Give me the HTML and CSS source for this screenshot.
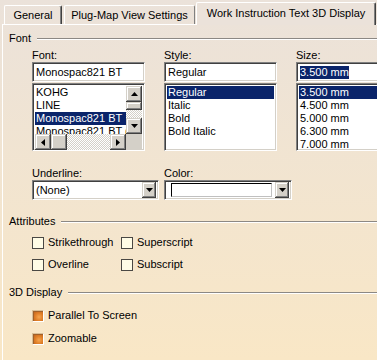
FILE: index.html
```html
<!DOCTYPE html>
<html lang="en">
<head>
<meta charset="UTF-8">
<title>Work Instruction Text 3D Display</title>
<link rel="stylesheet" href="styles.css">
</head>
<body>
<div class="dialog">
    <div class="tabs">
        <div class="tab tab-general">General</div>
        <div class="tab tab-plug">Plug-Map View Settings</div>
        <div class="tab tab-work active">Work Instruction Text 3D Display</div>
    </div>

    <div class="panel">
        <div class="group-title"><span>Font</span><i class="rule"></i></div>

        <div class="font-grid">
            <div class="field">
                <div class="label">Font:</div>
                <div class="edit sunken">Monospac821 BT</div>
                <div class="list sunken scrolled">
                    <div class="items">
                        <div class="item">KOHG</div>
                        <div class="item">LINE</div>
                        <div class="item selected">Monospac821 BT</div>
                        <div class="item">Monospac821 BT (</div>
                    </div>
                    <div class="vscroll">
                        <div class="btn"><svg width="7" height="4" viewBox="0 0 7 4"><path d="M0 4h7L3.5 0z"/></svg></div>
                        <div class="track v"><div class="thumb"></div></div>
                        <div class="btn"><svg width="7" height="4" viewBox="0 0 7 4"><path d="M0 0h7L3.5 4z"/></svg></div>
                    </div>
                    <div class="hscroll">
                        <div class="btn"><svg width="4" height="7" viewBox="0 0 4 7"><path d="M4 0v7L0 3.5z"/></svg></div>
                        <div class="btn thumb-h"></div>
                        <div class="track"></div>
                        <div class="btn"><svg width="4" height="7" viewBox="0 0 4 7"><path d="M0 0v7L4 3.5z"/></svg></div>
                    </div>
                    <div class="corner"></div>
                </div>
            </div>

            <div class="field">
                <div class="label">Style:</div>
                <div class="edit sunken">Regular</div>
                <div class="list sunken">
                    <div class="item selected">Regular</div>
                    <div class="item">Italic</div>
                    <div class="item">Bold</div>
                    <div class="item">Bold Italic</div>
                </div>
            </div>

            <div class="field">
                <div class="label">Size:</div>
                <div class="edit sunken"><span class="sel">3.500 mm</span></div>
                <div class="list sunken">
                    <div class="item selected">3.500 mm</div>
                    <div class="item">4.500 mm</div>
                    <div class="item">5.000 mm</div>
                    <div class="item">6.300 mm</div>
                    <div class="item">7.000 mm</div>
                </div>
            </div>
        </div>

        <div class="combo-row">
            <div class="field">
                <div class="label">Underline:</div>
                <div class="combo sunken">
                    <span class="combo-text">(None)</span>
                    <div class="btn drop"><svg width="7" height="4" viewBox="0 0 7 4"><path d="M0 0h7L3.5 4z"/></svg></div>
                </div>
            </div>
            <div class="field">
                <div class="label">Color:</div>
                <div class="combo color sunken">
                    <span class="swatch"></span>
                    <div class="btn drop"><svg width="7" height="4" viewBox="0 0 7 4"><path d="M0 0h7L3.5 4z"/></svg></div>
                </div>
            </div>
        </div>

        <div class="group-title spaced"><span>Attributes</span><i class="rule"></i></div>
        <div class="checks">
            <div class="check"><span class="box"></span>Strikethrough</div>
            <div class="check"><span class="box"></span>Superscript</div>
            <div class="check"><span class="box"></span>Overline</div>
            <div class="check"><span class="box"></span>Subscript</div>
        </div>

        <div class="group-title spaced"><span>3D Display</span><i class="rule"></i></div>
        <div class="checks single">
            <div class="check"><span class="box on"></span>Parallel To Screen</div>
            <div class="check"><span class="box on"></span>Zoomable</div>
        </div>
    </div>
</div>
</body>
</html>
```

FILE: styles.css
```css
body {
    margin: 0;
    width: 377px;
    height: 360px;
    overflow: hidden;
    font-family: "Liberation Sans", Arial, sans-serif;
    font-size: 11px;
    line-height: 13px;
    color: #000;
    background: linear-gradient(#ebe2da, #f9e7c6);
}
.dialog {
    margin-left: 2px;
    height: 360px;
    display: flex;
    flex-direction: column;
}

/* tabs */
.tabs {
    display: flex;
    align-items: flex-end;
    height: 24px;
    border-bottom: 1px solid #fff;
}
.tab {
    box-sizing: border-box;
    height: 19px;
    margin-left: 2px;
    border-top: 1px solid #fff;
    border-left: 1px solid #fff;
    border-right: 1px solid #404040;
    box-shadow: inset -1px 0 #808080;
    border-radius: 2px 2px 0 0;
    display: flex;
    align-items: center;
    justify-content: center;
    white-space: nowrap;
}
.tab-general { width: 58px; }
.tab-plug { width: 131px; border-right-color: #808080; box-shadow: none; }
.tab-work { width: 180px; margin-left: 1px; }
.tab.active {
    height: 23px;
    margin-bottom: -1px;
    padding-bottom: 1px;
    background: #ebe2da;
}

/* panel */
.panel {
    flex: 1;
    border-left: 1px solid #fff;
    padding: 7px 0 0 6px;
}
.group-title {
    display: flex;
    align-items: center;
    gap: 6px;
    height: 13px;
}
.group-title.spaced { margin-top: 15px; }
.rule {
    flex: 1;
    height: 0;
    border-top: 1px solid #8c8884;
    border-bottom: 1px solid #fff;
}

.font-grid {
    display: grid;
    grid-template-columns: 113px 113px 90px;
    column-gap: 19px;
    margin-left: 23px;
    margin-top: 4px;
}
.label { height: 13px; white-space: nowrap; }

.sunken {
    box-sizing: border-box;
    border: 1px solid;
    border-color: #808080 #fff #fff #808080;
    box-shadow: inset 1px 1px #404040, inset -1px -1px #d4d0c8;
    background: #fff;
}
.edit {
    height: 20px;
    padding: 2px 3px;
    display: flex;
    align-items: center;
    white-space: nowrap;
    overflow: hidden;
}
.sel { background: #0a246a; color: #fff; }

.list {
    height: 68px;
    margin-top: 1px;
    padding: 2px;
    overflow: hidden;
}
.item {
    height: 13px;
    padding-left: 1px;
    white-space: nowrap;
    overflow: hidden;
}
.item.selected { background: #0a246a; color: #fff; }

.list.scrolled {
    display: grid;
    grid-template-columns: 1fr 16px;
    grid-template-rows: 48px 16px;
}
.items { overflow: hidden; }

.btn {
    background: #d4d0c8;
    box-shadow: inset -1px -1px #404040, inset 1px 1px #d4d0c8, inset -2px -2px #808080, inset 2px 2px #fff;
    display: flex;
    align-items: center;
    justify-content: center;
    width: 16px;
    height: 16px;
    flex-shrink: 0;
}
.vscroll { display: flex; flex-direction: column; }
.hscroll { display: flex; }
.track {
    flex: 1;
    background: repeating-conic-gradient(#fff 0 25%, #d4d0c8 0 50%) 0 0 / 2px 2px;
}
.track.v { display: flex; flex-direction: column; }
.thumb {
    height: 8px;
    background: #d4d0c8;
    box-shadow: inset -1px -1px #404040, inset 1px 1px #d4d0c8, inset -2px -2px #808080, inset 2px 2px #fff;
}
.corner { background: #d4d0c8; }

/* underline / color */
.combo-row {
    display: grid;
    grid-template-columns: 127px 128px;
    column-gap: 5px;
    margin: 16px 0 0 23px;
}
.combo {
    height: 20px;
    padding: 2px;
    display: flex;
    align-items: center;
}
.combo-text { flex: 1; padding-left: 1px; }
.drop { width: 14px; }
.combo.color { padding-left: 6px; }
.swatch {
    box-sizing: border-box;
    width: 101px;
    height: 14px;
    border: 1px solid;
    border-color: #000 #c0c0c0 #c0c0c0 #000;
    margin-right: auto;
}

/* checkboxes */
.checks {
    display: grid;
    grid-template-columns: 89px auto;
    row-gap: 9px;
    margin: 8px 0 0 23px;
}
.checks.single {
    grid-template-columns: auto;
    row-gap: 10px;
    margin-top: 10px;
}
.check {
    display: flex;
    align-items: center;
    gap: 4px;
    height: 13px;
    white-space: nowrap;
}
.box {
    box-sizing: border-box;
    width: 12px;
    height: 12px;
    border: 1px solid #4a4844;
    background: #fffce6;
}
.box.on {
    border-color: #d9bf98 #fff #fff #d9bf98;
    background: radial-gradient(circle at 60% 60%, #f6a650 0, #e07f28 45%, #b45a1a 100%);
    box-shadow: inset 1px 1px #a0602a;
}
```
